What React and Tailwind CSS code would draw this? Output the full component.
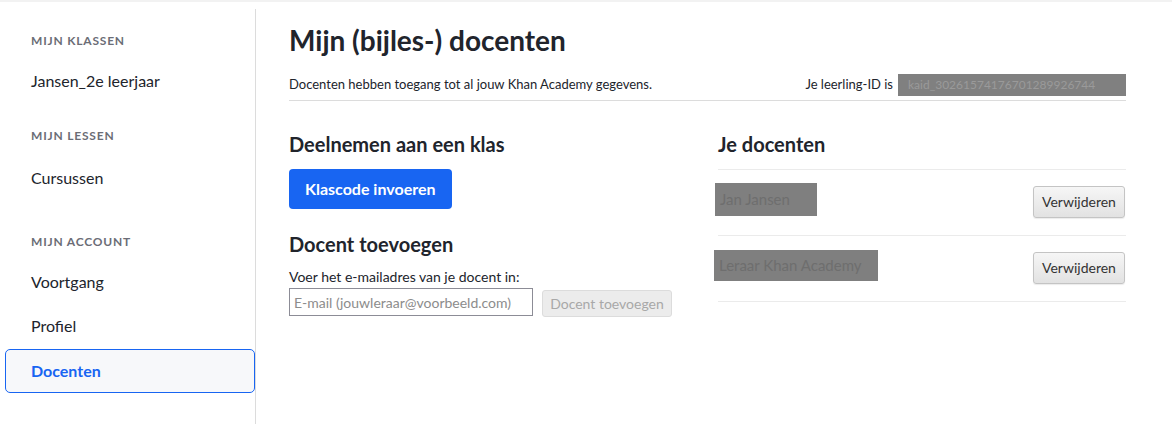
export default function App() {
  const font = { fontFamily: 'Lato, "Noto Sans", sans-serif' };
  const navItem = 'block px-[31px] text-[16px] text-[#21242c]';
  const label = 'px-[31px] text-[12px] font-bold uppercase tracking-[0.8px] text-[#6b6d76]';

  return (
    <div className="h-[424px] w-[1172px] overflow-hidden bg-white border-t-2 border-[#f2f2f2]" style={font}>
      <div className="flex h-full">
        {/* Sidebar */}
        <aside className="mt-[7px] w-[256px] shrink-0 border-r border-[#dcdcdc]">
          <div className="pt-[23px]">
            <div className={label}>Mijn klassen</div>
            <div className={navItem + ' mt-[19px]'}>Jansen_2e leerjaar</div>
            <div className={label + ' mt-[34px]'}>Mijn lessen</div>
            <div className={navItem + ' mt-[21px]'}>Cursussen</div>
            <div className={label + ' mt-[43px]'}>Mijn account</div>
            <div className={navItem + ' mt-[19px]'}>Voortgang</div>
            <div className={navItem + ' mt-[20px]'}>Profiel</div>
            <div className="mt-[11px] ml-[5px] flex h-[44px] items-center rounded-[5px] border border-[#1865f2] bg-[#f7f8fa] px-[25px] text-[16px] font-bold text-[#1865f2]">
              Docenten
            </div>
          </div>
        </aside>

        {/* Main */}
        <main className="ml-[33px] w-[837px] pt-[20px]">
          <h1 className="text-[28px] font-bold leading-[36px] text-[#21242c]">Mijn (bijles-) docenten</h1>
          <div className="mt-[16px] flex items-center justify-between border-b border-[#dcdcdc] pb-[4px]">
            <p className="text-[13px] text-[#21242c]">Docenten hebben toegang tot al jouw Khan Academy gegevens.</p>
            <div className="flex items-center text-[13px] text-[#21242c]">
              <span>Je leerling-ID is</span>
              <span className="ml-[5px] flex h-[22px] w-[228px] items-center overflow-hidden whitespace-nowrap bg-[#808080] pl-[10px] text-[12px] text-[#9a9a9a]">
                kaid_30261574176701289926744
              </span>
            </div>
          </div>

          <div className="mt-[31px] flex">
            {/* Left column */}
            <section className="w-[429px]">
              <h2 className="text-[20px] font-bold leading-[24px] text-[#21242c]">Deelnemen aan een klas</h2>
              <button className="mt-[13px] h-[40px] rounded-[4px] bg-[#1865f2] px-[16px] text-[16px] font-bold text-white">
                Klascode invoeren
              </button>
              <h2 className="mt-[23px] text-[20px] font-bold leading-[24px] text-[#21242c]">Docent toevoegen</h2>
              <p className="mt-[12px] text-[14px] leading-[18px] text-[#21242c]">Voer het e-mailadres van je docent in:</p>
              <div className="mt-[2px] flex items-start">
                <div className="flex h-[28px] w-[244px] items-center border border-[#8c8c96] bg-white px-[4px] text-[14px] text-[#8c8c8c]">
                  E-mail (jouwleraar@voorbeeld.com)
                </div>
                <button className="ml-[9px] mt-[2px] h-[27px] w-[130px] rounded-[3px] border border-[#dcdcdc] bg-[#ececec] text-[14px] text-[#a8a8a8]">
                  Docent toevoegen
                </button>
              </div>
            </section>

            {/* Right column */}
            <section className="w-[408px]">
              <h2 className="text-[20px] font-bold leading-[24px] text-[#21242c]">Je docenten</h2>
              <div className="mt-[13px] border-t border-[#ebebeb]">
                {[
                  { name: 'Jan Jansen', w: 102, h: 33, ml: -3 },
                  { name: 'Leraar Khan Academy', w: 164, h: 31, ml: -4 },
                ].map((t) => (
                  <div key={t.name} className="flex h-[66px] items-center justify-between border-b border-[#ebebeb]">
                    <span
                      className="-mt-[6px] flex items-center overflow-hidden whitespace-nowrap bg-[#7f7f7f] pl-[5px] text-[15px] text-[#6e6e6e]"
                      style={{ width: t.w, height: t.h, marginLeft: t.ml }}
                    >
                      {t.name}
                    </span>
                    <button className="-mt-[2px] mr-[1px] h-[32px] w-[92px] rounded-[3px] border border-[#c4c4c4] bg-gradient-to-b from-[#f6f6f6] to-[#e2e2e2] text-[14px] text-[#333] shadow-[0_1px_1px_rgba(0,0,0,0.08)]">
                      Verwijderen
                    </button>
                  </div>
                ))}
              </div>
            </section>
          </div>
        </main>
      </div>
    </div>
  );
}
